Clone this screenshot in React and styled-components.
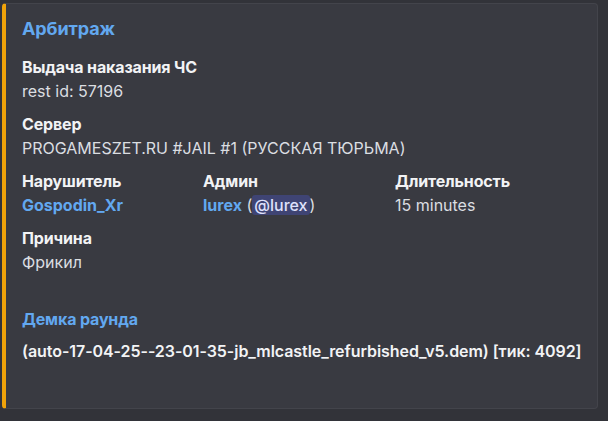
import React from "react";
import styled, { createGlobalStyle } from "styled-components";

const GlobalStyle = createGlobalStyle`
  html, body {
    margin: 0;
    background: #323339;
  }
  body {
    font-family: Inter, "Noto Sans", sans-serif;
    -webkit-font-smoothing: antialiased;
  }
`;

const Page = styled.div`
  width: 608px;
  height: 421px;
  padding: 3px 10px 0 2px;
  box-sizing: border-box;
`;

const Embed = styled.article`
  height: 406px;
  box-sizing: border-box;
  background: #393a41;
  border: 1px solid #43444b;
  border-left: 4px solid ${(p) => p.accent};
  border-radius: 4px;
  padding: 13px 16px 0 16px;
  color: #dbdee1;
`;

const Title = styled.div`
  font-size: 18px;
  font-weight: 700;
  line-height: 24px;
  color: #62a8f0;
  margin-bottom: 15px;
  letter-spacing: -0.1px;
`;

const Fields = styled.div`
  display: grid;
  grid-template-columns: 181px 192px 1fr;
  row-gap: 11px;
`;

const Field = styled.div`
  grid-column: ${(p) => (p.inline ? "auto" : "1 / -1")};
  min-width: 0;
`;

const Name = styled.div`
  font-size: 16px;
  font-weight: 700;
  line-height: 22px;
  letter-spacing: -0.15px;
  color: ${(p) => (p.link ? "#62a8f0" : "#f2f3f5")};
  margin-bottom: 2px;
`;

const Value = styled.div`
  font-size: 16px;
  line-height: 22px;
  color: #dbdee1;
  font-weight: 400;
  white-space: nowrap;
`;

const Link = styled.span`
  color: #62a8f0;
  font-weight: 700;
`;

const Mention = styled.span`
  background: #3f4474;
  color: #dfe1fc;
  border-radius: 3px;
  padding: 0 2px;
  font-weight: 500;
`;

const DemoField = styled.div`
  grid-column: 1 / -1;
  margin-top: 24px;
`;

const DemoValue = styled(Value)`
  margin-top: 10px;
  font-weight: 600;
  letter-spacing: -0.06px;
  color: #f2f3f5;
`;

export default function App() {
  return (
    <>
      <GlobalStyle />
      <Page>
        <Embed accent="#f0a30a">
          <Title>Арбитраж</Title>
          <Fields>
            <Field>
              <Name>Выдача наказания ЧС</Name>
              <Value>rest id: 57196</Value>
            </Field>
            <Field>
              <Name>Сервер</Name>
              <Value>PROGAMESZET.RU #JAIL #1 (РУССКАЯ ТЮРЬМА)</Value>
            </Field>
            <Field inline>
              <Name>Нарушитель</Name>
              <Value>
                <Link>Gospodin_Xr</Link>
              </Value>
            </Field>
            <Field inline>
              <Name>Админ</Name>
              <Value>
                <Link>lurex</Link> (<Mention>@lurex</Mention>)
              </Value>
            </Field>
            <Field inline>
              <Name>Длительность</Name>
              <Value>15 minutes</Value>
            </Field>
            <Field>
              <Name>Причина</Name>
              <Value>Фрикил</Value>
            </Field>
            <DemoField>
              <Name link>Демка раунда</Name>
              <DemoValue>
                (auto-17-04-25--23-01-35-jb_mlcastle_refurbished_v5.dem) [тик: 4092]
              </DemoValue>
            </DemoField>
          </Fields>
        </Embed>
      </Page>
    </>
  );
}
